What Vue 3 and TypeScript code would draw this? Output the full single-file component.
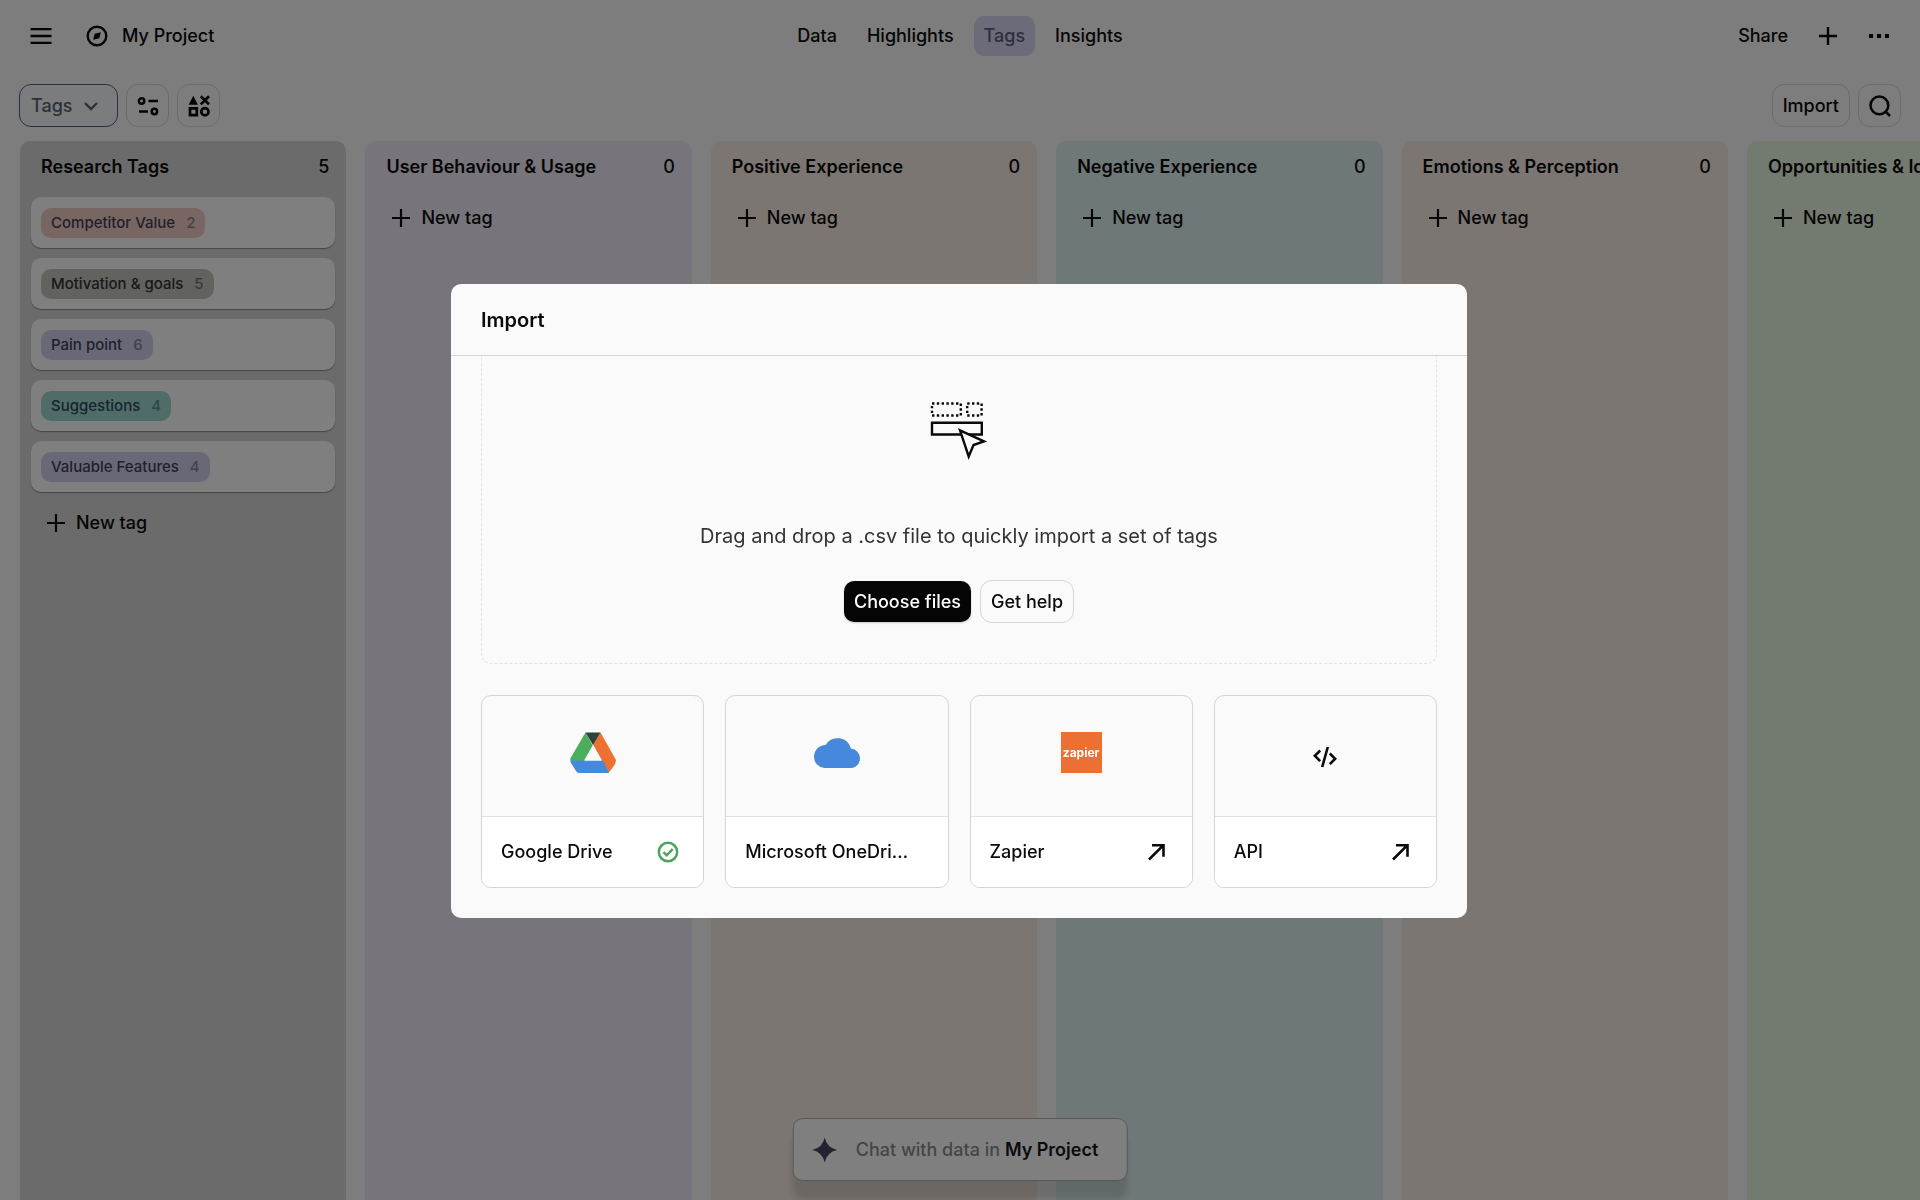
<script setup lang="ts">
import { ref } from 'vue'

interface Tag {
  name: string
  count: number
  tone: string
}

interface Column {
  title: string
  tone: string
  tags: Tag[]
}

interface Source {
  name: string
  logo: 'drive' | 'onedrive' | 'zapier' | 'api'
  state: 'connected' | 'external' | 'none'
}

const tabs = ['Data', 'Highlights', 'Tags', 'Insights']
const activeTab = ref('Tags')
const view = ref('Tags')

const columns: Column[] = [
  {
    title: 'Research Tags',
    tone: 'grey',
    tags: [
      { name: 'Competitor Value', count: 2, tone: 'coral' },
      { name: 'Motivation & goals', count: 5, tone: 'stone' },
      { name: 'Pain point', count: 6, tone: 'violet' },
      { name: 'Suggestions', count: 4, tone: 'teal' },
      { name: 'Valuable Features', count: 4, tone: 'violet' },
    ],
  },
  { title: 'User Behaviour & Usage', tone: 'lavender', tags: [] },
  { title: 'Positive Experience', tone: 'sand', tags: [] },
  { title: 'Negative Experience', tone: 'aqua', tags: [] },
  { title: 'Emotions & Perception', tone: 'rose', tags: [] },
  { title: 'Opportunities & Ideas', tone: 'lime', tags: [] },
]

const sources: Source[] = [
  { name: 'Google Drive', logo: 'drive', state: 'connected' },
  { name: 'Microsoft OneDrive', logo: 'onedrive', state: 'none' },
  { name: 'Zapier', logo: 'zapier', state: 'external' },
  { name: 'API', logo: 'api', state: 'external' },
]
</script>

<template>
  <div class="app">
    <header class="topbar">
      <div class="side">
        <button class="icon-btn" type="button" aria-label="Menu">
          <svg width="22" height="22" viewBox="0 0 22 22" fill="none" stroke="currentColor" stroke-width="2.3">
            <path d="M0.5 4.200h21M0.500 11h21M0.500 17.800h21" />
          </svg>
        </button>
        <a class="project" href="#">
          <svg width="22" height="22" viewBox="0 0 22 22" fill="none" stroke="currentColor" stroke-width="2.400">
            <circle cx="11" cy="11" r="9.300" />
            <path d="M14.800 7.200 13.300 13.300 7.200 14.800 8.700 8.700Z" fill="currentColor" stroke="none" />
          </svg>
          My Project
        </a>
      </div>
      <nav class="tabs">
        <a v-for="tab in tabs" :key="tab" href="#" class="tab" :class="{ active: tab === activeTab }" @click.prevent="activeTab = tab">{{ tab }}</a>
      </nav>
      <div class="side end">
        <button class="share" type="button">Share</button>
        <button class="icon-btn" type="button" aria-label="Add">
          <svg width="22" height="22" viewBox="0 0 22 22" fill="none" stroke="currentColor" stroke-width="2.400">
            <path d="M11 2v18M2 11h18" />
          </svg>
        </button>
        <button class="icon-btn" type="button" aria-label="More">
          <svg width="22" height="22" viewBox="0 0 22 22" fill="currentColor">
            <path d="M1 9h4v4H1zM9 9h4v4H9zM17 9h4v4h-4z" />
          </svg>
        </button>
      </div>
    </header>

    <div class="toolbar">
      <div class="view-select">
        <select v-model="view" aria-label="View">
          <option>Tags</option>
        </select>
        <svg width="16" height="16" viewBox="0 0 16 16" fill="none" stroke="currentColor" stroke-width="2.400">
          <path d="M2 5l6 6 6-6" />
        </svg>
      </div>
      <button class="outline square" type="button" aria-label="Filter">
        <svg width="22" height="22" viewBox="0 0 22 22" fill="none" stroke="currentColor" stroke-width="2.500">
          <circle cx="4.600" cy="6" r="2.700" />
          <path d="M11.500 6h9.500M2 16.500h9" />
          <circle cx="17.400" cy="16.500" r="2.700" />
        </svg>
      </button>
      <button class="outline square" type="button" aria-label="Group">
        <svg width="22" height="22" viewBox="0 0 22 22" fill="none" stroke="currentColor" stroke-width="2.700">
          <path d="M5.300 0.800l4.600 9H0.700z" fill="currentColor" stroke="none" />
          <path d="M12.800 1.200l8.200 8.200M21 1.200l-8.200 8.200" />
          <path d="M2 13.300h6.800v6.800H2z" />
          <circle cx="16.900" cy="16.700" r="3.600" />
        </svg>
      </button>
      <span class="spacer"></span>
      <button class="outline" type="button">Import</button>
      <button class="outline square" type="button" aria-label="Search">
        <svg width="22" height="22" viewBox="0 0 22 22" fill="none" stroke="currentColor" stroke-width="2.500">
          <circle cx="10.400" cy="10.400" r="8.900" />
          <path d="M16.500 16.500l4.500 4.500" />
        </svg>
      </button>
    </div>

    <main class="board">
      <section v-for="col in columns" :key="col.title" class="column" :class="col.tone">
        <div class="column-head">
          <h2>{{ col.title }}</h2>
          <span>{{ col.tags.length }}</span>
        </div>
        <div v-for="tag in col.tags" :key="tag.name" class="tag-card">
          <span class="chip" :class="tag.tone">{{ tag.name }} <span class="count">{{ tag.count }}</span></span>
        </div>
        <button class="new-tag" type="button">
          <svg width="20" height="20" viewBox="0 0 20 20" fill="none" stroke="currentColor" stroke-width="2.200">
            <path d="M10 1v18M1 10h18" />
          </svg>
          New tag
        </button>
      </section>
    </main>

    <button class="chat" type="button">
      <svg width="26" height="26" viewBox="0 0 26 26" fill="#4a4466">
        <path d="M13 0.500 Q15.200 10.800 25.500 13 Q15.200 15.200 13 25.500 Q10.800 15.200 0.500 13 Q10.800 10.800 13 0.500Z" />
      </svg>
      <span>Chat with data in <strong>My Project</strong></span>
    </button>

    <div class="backdrop">
      <div class="modal" role="dialog" aria-modal="true" aria-labelledby="import-title">
        <div class="modal-head">
          <h1 id="import-title">Import</h1>
        </div>
        <div class="modal-body">
          <div class="dropzone">
            <svg width="58" height="60" viewBox="0 0 58 60" fill="none" stroke="#0a0a0a" stroke-width="2.400">
              <path d="M2 2.500h28.800v12H2zM37.200 2.500h14.400v12H37.200z" stroke-dasharray="2.400 2.400" />
              <path d="M2 21.700h49.800v11.800H2z" />
              <path d="M30 29.300l24 11-10.500 3.700-4.800 11.500z" fill="#fafafa" />
            </svg>
            <p>Drag and drop a .csv file to quickly import a set of tags</p>
            <div class="actions">
              <button class="primary" type="button">Choose files</button>
              <button class="outline" type="button">Get help</button>
            </div>
          </div>
          <div class="sources">
            <a v-for="source in sources" :key="source.name" href="#" class="source">
              <span class="logo">
                <svg v-if="source.logo === 'drive'" width="46" height="42" viewBox="0 0 46 42">
                  <path d="M15.500 0.500 0 27 8 41 23 14Z" fill="#4bae5d" />
                  <path d="M30.500 0.500 46 28 Q46 30 44.500 33 L38.500 41 23 12.500Z" fill="#ee7134" />
                  <path d="M15.500 0.500h15L23 13Z" fill="#30403a" />
                  <path d="M0 28.500h33l6 12.500H9.500Q7.500 41 6 39 L1 31Z" fill="#4689dc" />
                  <path d="M23 13 14 28.500h18Z" fill="#fafafa" />
                </svg>
                <svg v-else-if="source.logo === 'onedrive'" width="46" height="32" viewBox="0 0 46 32" fill="#4689dc">
                  <path d="M10.500 31A11 11 0 0 1 0 20 11.500 11.500 0 0 1 11.500 8 14 14 0 0 1 37 11.500 10 10 0 0 1 46 21.500 9.800 9.800 0 0 1 38 31Z" />
                </svg>
                <span v-else-if="source.logo === 'zapier'" class="zapier">zapier</span>
                <svg v-else class="code" width="24" height="22" viewBox="0 0 24 22" fill="none" stroke="#0a0a0a" stroke-width="2.600">
                  <path d="M7.200 4.500 1.800 9.800 7.200 15.100M16.800 7.500 22.200 12.800 16.800 18.100M14.800 1 9.200 21" />
                </svg>
              </span>
              <span class="source-foot">
                <span class="source-name">{{ source.name }}</span>
                <span class="state">
                  <svg v-if="source.state === 'connected'" width="22" height="22" viewBox="0 0 22 22" fill="none" stroke="#4fa35f" stroke-width="2.500">
                    <circle cx="11" cy="11" r="9.200" />
                    <path d="M6.500 11.200l3.200 3.100 6-6.200" />
                  </svg>
                  <svg v-else-if="source.state === 'external'" width="22" height="22" viewBox="0 0 22 22" fill="none" stroke="#0a0a0a" stroke-width="2.600">
                    <path d="M3 18.500 17.200 4.300M6 4.200h11.500v11.500" />
                  </svg>
                </span>
              </span>
            </a>
          </div>
        </div>
      </div>
    </div>
  </div>
</template>

<style>
body {
  margin: 0;
  overflow: hidden;
}
</style>

<style scoped>
.app {
  position: relative;
  display: flex;
  flex-direction: column;
  height: 100vh;
  overflow: hidden;
  background: #fafafa;
  color: #0a0a0a;
  font: 500 18px/24px Inter, 'Liberation Sans', sans-serif;
}

.app * {
  box-sizing: border-box;
}

button,
select {
  padding: 0;
  border: 0;
  background: none;
  color: inherit;
  font: inherit;
}

a {
  color: inherit;
  text-decoration: none;
}

svg {
  display: block;
  flex: none;
}

.topbar {
  display: flex;
  align-items: center;
  flex: none;
  height: 71px;
  padding: 0 30px;
}

.side {
  display: flex;
  flex: 1;
  align-items: center;
  gap: 34px;
}

.side.end {
  justify-content: flex-end;
  gap: 29px;
}

.project {
  display: flex;
  align-items: center;
  gap: 14px;
}

.tabs {
  display: flex;
  gap: 10px;
}

.tab {
  padding: 8px 10px;
  border-radius: 10px;
}

.tab.active {
  background: #d8d6f4;
  color: #5f5c7c;
}

.toolbar {
  display: flex;
  align-items: center;
  gap: 8px;
  flex: none;
  height: 70px;
  padding: 0 19px 1px;
}

.view-select {
  display: flex;
  align-items: center;
  position: relative;
  height: 43px;
  border: 1px solid #5e588c;
  border-radius: 12px;
  background: #f6f9fa;
  color: #56646e;
}

.view-select select {
  height: 41px;
  padding: 0 44px 0 11px;
  appearance: none;
  outline: none;
}

.view-select svg {
  position: absolute;
  right: 18px;
  pointer-events: none;
}

.outline {
  display: flex;
  align-items: center;
  justify-content: center;
  height: 43px;
  padding: 0 10px;
  border: 1px solid #d6d6d6;
  border-radius: 12px;
}

.square {
  width: 43px;
  padding: 0;
}

.spacer {
  flex: 1;
}

.board {
  display: flex;
  flex: 1;
  gap: 19px;
  min-height: 0;
  padding-left: 20px;
  overflow: hidden;
}

.column {
  display: flex;
  flex: none;
  flex-direction: column;
  gap: 10px;
  width: 17vw;
  padding: 0 11px;
  border-radius: 10px 10px 0 0;
}

.column-head {
  display: flex;
  align-items: center;
  justify-content: space-between;
  height: 46px;
  padding: 6px 6px 0 10px;
}

.column-head h2 {
  margin: 0;
  font-size: 18px;
  font-weight: 600;
  line-height: 24px;
  white-space: nowrap;
}

.grey { background: #d6d6d6; }
.lavender { background: #eeebf6; }
.sand { background: #f6ece3; }
.aqua { background: #dff0f1; }
.rose { background: #f6ece5; }
.lime { background: #e7f5df; }

.tag-card {
  display: flex;
  align-items: center;
  height: 51px;
  padding: 0 10px;
  border-radius: 10px;
  background: #fff;
  box-shadow: 0 1px 1px rgba(0, 0, 0, 0.35);
}

.chip {
  padding: 4px 10px;
  border-radius: 10px;
  color: #42415a;
  font-size: 15px;
  line-height: 22px;
  white-space: nowrap;
}

.count {
  margin-left: 7px;
  opacity: 0.55;
}

.coral { background: #f0ccc4; }
.stone { background: #c5c4bf; color: #33332f; }
.violet { background: #d2d1ee; }
.teal { background: #a0d8d0; color: #2d4a5c; }

.new-tag {
  display: flex;
  align-items: center;
  gap: 10px;
  height: 40px;
  padding: 2px 0 0 15px;
}

.chat {
  display: flex;
  position: absolute;
  bottom: 19px;
  left: 50%;
  align-items: center;
  gap: 18px;
  height: 63px;
  padding: 0 28px 0 18px;
  border: 1px solid #b0b0b0;
  border-radius: 10px;
  background: #fff;
  box-shadow: 0 18px 6px rgba(0, 0, 0, 0.13);
  color: #8b8b8b;
  white-space: nowrap;
  transform: translateX(-50%);
}

.chat strong {
  color: #16161c;
  font-weight: 600;
}

.backdrop {
  display: flex;
  position: fixed;
  inset: 0;
  align-items: center;
  justify-content: center;
  padding: 22px 22px 20px 20px;
  background: rgba(0, 0, 0, 0.5);
}

.modal {
  width: 100%;
  max-width: 1016px;
  overflow: hidden;
  border-radius: 10px;
  background: #fafafa;
}

.modal-head {
  padding: 22px 30px 21px;
  border-bottom: 1px solid #d4d4d4;
}

.modal-head h1 {
  margin: 0;
  font-size: 20px;
  font-weight: 600;
  line-height: 28px;
}

.modal-body {
  padding: 0 30px 30px;
}

.dropzone {
  display: flex;
  flex-direction: column;
  align-items: center;
  padding: 45px 20px 40px;
  border: 1px dashed #e2e2e2;
  border-top: 0;
  border-radius: 0 0 10px 10px;
}

.dropzone p {
  margin: 61px 0 30px;
  color: #333;
  font-size: 20px;
  font-weight: 400;
  line-height: 28px;
}

.actions {
  display: flex;
  align-items: center;
  gap: 9px;
}

.primary {
  height: 41px;
  padding: 0 10px;
  border-radius: 10px;
  background: #050505;
  box-shadow: 0 1px 2px rgba(0, 0, 0, 0.2);
  color: #fff;
}

.sources {
  display: grid;
  grid-template-columns: repeat(4, minmax(0, 1fr));
  gap: 21px;
  margin-top: 31px;
}

.source {
  overflow: hidden;
  border: 1px solid #d4d4d4;
  border-radius: 10px;
}

.logo {
  display: flex;
  align-items: center;
  justify-content: center;
  height: 120px;
  padding-bottom: 7px;
}

.code {
  margin-top: 8px;
}

.zapier {
  display: flex;
  align-items: center;
  justify-content: center;
  width: 41px;
  height: 41px;
  background: #ec7033;
  color: #fff;
  font-size: 12px;
  font-weight: 700;
}

.source-foot {
  display: flex;
  align-items: center;
  justify-content: space-between;
  gap: 14px;
  height: 71px;
  padding: 0 24px 0 19px;
  border-top: 1px solid #e0e0e0;
  background: #fff;
}

.source-name {
  overflow: hidden;
  text-overflow: ellipsis;
  white-space: nowrap;
}

.state {
  flex: none;
}
</style>
